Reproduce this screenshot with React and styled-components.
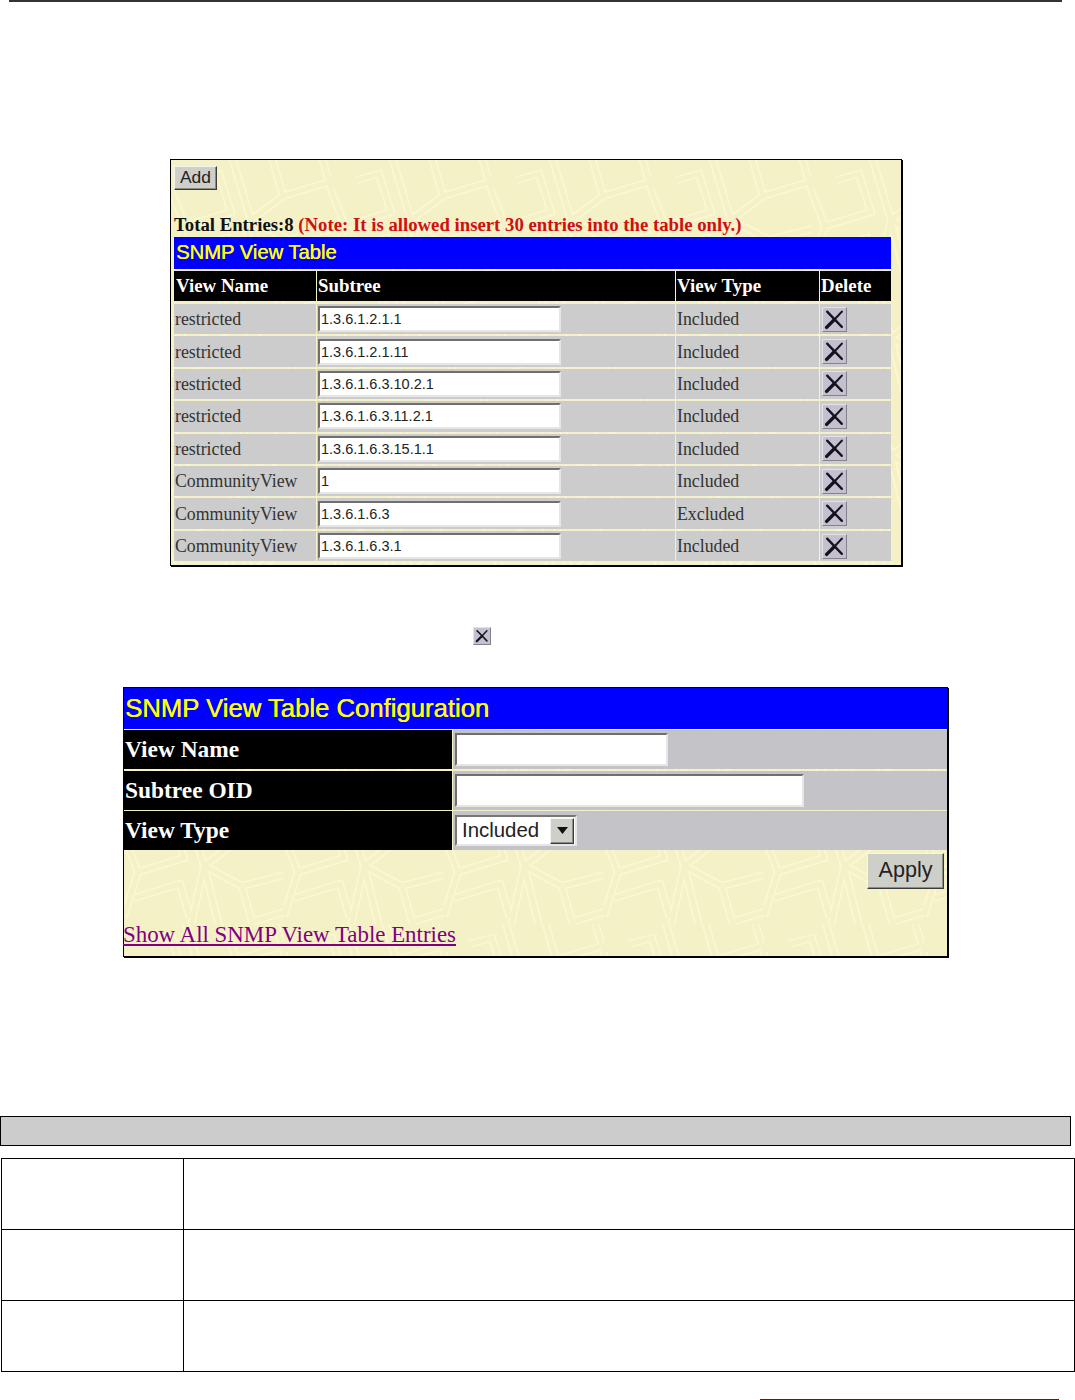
import React from "react";
import styled, { createGlobalStyle } from "styled-components";

const motif =
  "M0 30 L14 66 L60 52 L48 14 L26 20 M100 -6 L112 36 L158 22 L150 -6 M60 -6 L80 60 L66 124 M80 60 L96 124 M14 66 L0 110 M158 22 L172 66 L118 80 L128 116 L160 106 M10 92 L56 78 L66 112 M80 60 L118 80 M112 36 L80 60";
const tile = `<svg xmlns='http://www.w3.org/2000/svg' width='160' height='118'><g fill='none'><path d='${motif}' stroke='#faf7d2' stroke-width='8'/><path d='${motif}' stroke='#f5f1c6' stroke-width='4.6'/></g></svg>`;
const patternUrl = `url("data:image/svg+xml,${encodeURIComponent(tile)}")`;

const GlobalStyle = createGlobalStyle`
  html, body {
    margin: 0;
    padding: 0;
    background: #fff;
  }
  body {
    font-family: "Liberation Serif", "Times New Roman", serif;
  }
`;

const Page = styled.div`
  width: 1075px;
  height: 1400px;
  overflow: hidden;
  display: flex;
  flex-direction: column;
`;

const TopRule = styled.div`
  height: 2px;
  margin: 0 13px 0 9px;
  background: #333;
`;

const Panel = styled.div`
  box-sizing: border-box;
  display: flex;
  flex-direction: column;
  width: ${({ $width }) => $width}px;
  margin-left: ${({ $left }) => $left}px;
  margin-top: ${({ $top }) => $top}px;
  border: 1px solid #000;
  box-shadow: 1px 1px 0 #000;
  background-color: #f5f1c6;
  background-image: ${patternUrl};
`;

const ViewPanel = styled(Panel)`
  padding: 6px 10px 4px 3px;
`;

const RaisedButton = styled.button`
  box-sizing: border-box;
  align-self: ${({ $end }) => ($end ? "flex-end" : "flex-start")};
  width: ${({ $w }) => $w}px;
  height: ${({ $h }) => $h}px;
  margin: 0;
  padding: 0 0 2px;
  font-family: "Liberation Sans", Arial, sans-serif;
  font-size: ${({ $size }) => $size}px;
  color: #222;
  background: #cfcfca;
  border: 1px solid;
  border-color: #f4f4f0 #3c3c3c #3c3c3c #f4f4f0;
  box-shadow: inset -1px -1px 0 #8a8a86;
`;

const TotalLine = styled.div`
  height: 22px;
  line-height: 22px;
  margin: 24px 0 1px;
  font-size: 18.75px;
  font-weight: 700;
  color: #111;
  white-space: nowrap;
`;

const Note = styled.span`
  color: #d01010;
`;

const TitleBar = styled.div`
  display: flex;
  align-items: center;
  height: ${({ $h }) => $h}px;
  padding-left: ${({ $pad }) => $pad}px;
  background: #0000ff;
  color: #ffff00;
  font-family: "Liberation Sans", Arial, sans-serif;
  font-size: ${({ $size }) => $size}px;
  text-shadow: 0.4px 0 0 #ffff00;
  white-space: nowrap;
`;

const ViewGrid = styled.div`
  display: grid;
  grid-template-columns: 142px 358px 143px 71px;
  column-gap: 1px;
  align-items: stretch;
`;

const HeadRow = styled(ViewGrid)`
  height: 30px;
  margin-top: 2px;
  margin-bottom: 3px;
`;

const HeadCell = styled.div`
  display: flex;
  align-items: center;
  padding-left: 1px;
  background: #000;
  color: #fff;
  font-size: 18.9px;
  font-weight: 700;
  white-space: nowrap;
  &:first-child {
    padding-left: 2px;
  }
`;

const BodyRow = styled(ViewGrid)`
  height: 30.43px;
  margin-bottom: 2px;
  &:last-child {
    margin-bottom: 0;
  }
`;

const BodyCell = styled.div`
  display: flex;
  align-items: center;
  padding-left: ${({ $pad }) => $pad ?? 1}px;
  padding-top: ${({ $text }) => ($text ? 1 : 0)}px;
  background: #cccccc;
  color: #333;
  font-size: 17.8px;
  white-space: nowrap;
`;

const SunkenInput = styled.input`
  box-sizing: border-box;
  display: block;
  width: ${({ $w }) => $w}px;
  height: ${({ $h }) => $h}px;
  margin: 0;
  padding: 0 0 0 1px;
  font-family: "Liberation Sans", Arial, sans-serif;
  font-size: 14.5px;
  color: #222;
  background: #fff;
  border: 2px solid;
  border-color: #6f6f6f #e6e6e6 #e6e6e6 #6f6f6f;
  border-radius: 0;
  outline: none;
`;

const DeleteButton = styled.div`
  box-sizing: border-box;
  display: flex;
  align-items: center;
  justify-content: center;
  width: ${({ $size }) => $size}px;
  height: ${({ $size }) => $size}px;
  background: #c5c0cf;
  border: 1px solid;
  border-color: #e4e2e8 #84828a #84828a #e4e2e8;
`;

const IconRow = styled.div`
  display: flex;
  margin-top: 61px;
  padding-left: 473px;
`;

const ConfigRows = styled.div`
  display: flex;
  flex-direction: column;
  gap: 1.5px;
  margin-top: 1px;
`;

const ConfigRow = styled.div`
  display: grid;
  grid-template-columns: 328px 1fr;
  column-gap: 1px;
  height: 39px;
`;

const ConfigLabel = styled.div`
  display: flex;
  align-items: center;
  padding-left: 1px;
  background: #000;
  color: #fff;
  font-size: 23.4px;
  font-weight: 700;
  white-space: nowrap;
`;

const ConfigValue = styled.div`
  display: flex;
  align-items: center;
  padding-left: 2px;
  background: #c4c3c7;
`;

const SelectBox = styled.div`
  box-sizing: border-box;
  display: flex;
  align-items: center;
  justify-content: space-between;
  width: 122px;
  height: 31px;
  padding: 0 1px 0 5px;
  font-family: "Liberation Sans", Arial, sans-serif;
  font-size: 20.4px;
  color: #222;
  background: #fff;
  border: 2px solid;
  border-color: #777 #e6e6e6 #e6e6e6 #777;
`;

const SelectArrow = styled.div`
  box-sizing: border-box;
  display: flex;
  align-items: center;
  justify-content: center;
  width: 24px;
  height: 26px;
  background: #cfcfca;
  border: 1px solid;
  border-color: #f4f4f0 #3c3c3c #3c3c3c #f4f4f0;
  box-shadow: inset -1px -1px 0 #8a8a86;
`;

const ConfigFooter = styled.div`
  display: flex;
  flex-direction: column;
  padding: 3px 3px 8px 0;
`;

const ShowAllLink = styled.a`
  align-self: flex-start;
  margin: 33px 0 0 -1px;
  height: 26px;
  line-height: 26px;
  font-size: 22.9px;
  color: #800080;
  text-decoration: underline;
  white-space: nowrap;
`;

const ParamHeader = styled.div`
  box-sizing: border-box;
  width: 1071px;
  height: 31px;
  margin-top: 159px;
  background: #cccccc;
  border: 1px solid #000;
`;

const ParamTable = styled.div`
  box-sizing: border-box;
  width: 1074px;
  margin: 12px 0 0 1px;
  border: 1px solid #000;
  border-bottom: none;
`;

const ParamRow = styled.div`
  display: grid;
  grid-template-columns: 182px 1fr;
  height: 71px;
  box-sizing: border-box;
  border-bottom: 1px solid #000;
`;

const ParamName = styled.div`
  border-right: 1px solid #000;
`;

const ParamText = styled.div``;

const FooterRule = styled.div`
  height: 1px;
  width: 299px;
  margin: 27px 0 0 760px;
  background: #7a1010;
`;

const CloseIcon = ({ size }) => (
  <svg width={size} height={size} viewBox="0 0 20 20" fill="none" stroke="#15121c" strokeLinecap="round">
    <path d="M2.5 17.5 L10 10" strokeWidth="3.2" />
    <path d="M10 10 L17 2.5" strokeWidth="2" />
    <path d="M3 2.5 L17 17" strokeWidth="2.2" />
  </svg>
);

const entries = [
  ["restricted", "1.3.6.1.2.1.1", "Included"],
  ["restricted", "1.3.6.1.2.1.11", "Included"],
  ["restricted", "1.3.6.1.6.3.10.2.1", "Included"],
  ["restricted", "1.3.6.1.6.3.11.2.1", "Included"],
  ["restricted", "1.3.6.1.6.3.15.1.1", "Included"],
  ["CommunityView", "1", "Included"],
  ["CommunityView", "1.3.6.1.6.3", "Excluded"],
  ["CommunityView", "1.3.6.1.6.3.1", "Included"],
];

const App = () => (
  <Page>
    <GlobalStyle />
    <TopRule />

    <ViewPanel $width={732} $left={170} $top={157}>
      <RaisedButton $w={43} $h={24} $size={17.4}>Add</RaisedButton>
      <TotalLine>
        Total Entries:8 <Note>(Note: It is allowed insert 30 entries into the table only.)</Note>
      </TotalLine>
      <TitleBar $h={32} $pad={2} $size={20.2}>SNMP View Table</TitleBar>
      <HeadRow>
        <HeadCell>View Name</HeadCell>
        <HeadCell>Subtree</HeadCell>
        <HeadCell>View Type</HeadCell>
        <HeadCell>Delete</HeadCell>
      </HeadRow>
      <div>
        {entries.map(([name, oid, type]) => (
          <BodyRow key={oid}>
            <BodyCell $text>{name}</BodyCell>
            <BodyCell $pad={1}>
              <SunkenInput $w={243} $h={26} value={oid} readOnly />
            </BodyCell>
            <BodyCell $text>{type}</BodyCell>
            <BodyCell $pad={2}>
              <DeleteButton $size={25}>
                <CloseIcon size={21} />
              </DeleteButton>
            </BodyCell>
          </BodyRow>
        ))}
      </div>
    </ViewPanel>

    <IconRow>
      <DeleteButton $size={18}>
        <CloseIcon size={14} />
      </DeleteButton>
    </IconRow>

    <Panel $width={825} $left={123} $top={42}>
      <TitleBar $h={41} $pad={1} $size={25.7}>SNMP View Table Configuration</TitleBar>
      <ConfigRows>
        <ConfigRow>
          <ConfigLabel>View Name</ConfigLabel>
          <ConfigValue>
            <SunkenInput $w={213} $h={33} />
          </ConfigValue>
        </ConfigRow>
        <ConfigRow>
          <ConfigLabel>Subtree OID</ConfigLabel>
          <ConfigValue>
            <SunkenInput $w={349} $h={33} />
          </ConfigValue>
        </ConfigRow>
        <ConfigRow>
          <ConfigLabel>View Type</ConfigLabel>
          <ConfigValue>
            <SelectBox>
              Included
              <SelectArrow>
                <svg width="11" height="7" viewBox="0 0 11 7">
                  <path d="M0 0 H11 L5.5 7 Z" fill="#111" />
                </svg>
              </SelectArrow>
            </SelectBox>
          </ConfigValue>
        </ConfigRow>
      </ConfigRows>
      <ConfigFooter>
        <RaisedButton $end $w={77} $h={36} $size={21.6}>Apply</RaisedButton>
        <ShowAllLink href="#">Show All SNMP View Table Entries</ShowAllLink>
      </ConfigFooter>
    </Panel>

    <ParamHeader />
    <ParamTable>
      {[0, 1, 2].map((row) => (
        <ParamRow key={row}>
          <ParamName />
          <ParamText />
        </ParamRow>
      ))}
    </ParamTable>
    <FooterRule />
  </Page>
);

export default App;
